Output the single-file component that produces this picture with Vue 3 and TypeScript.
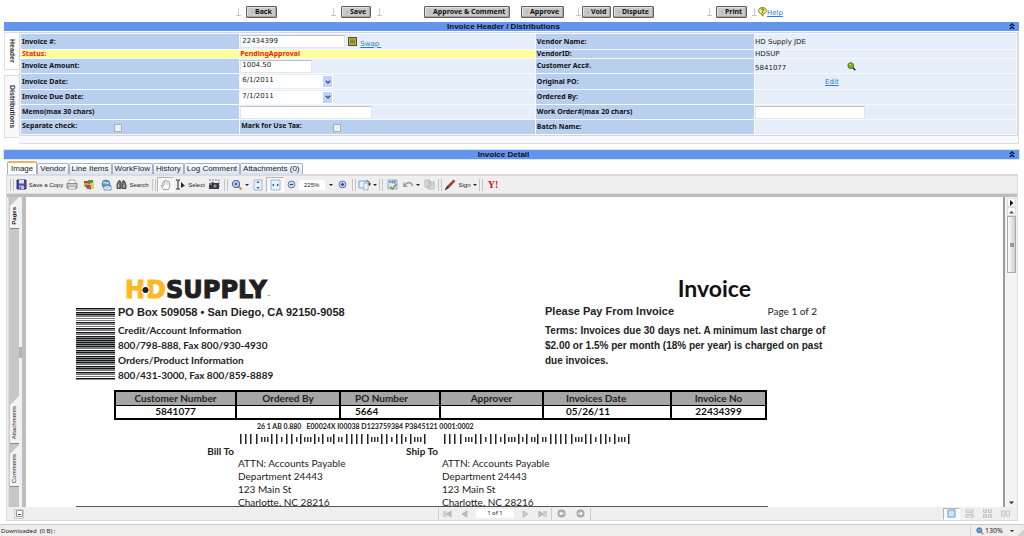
<script setup lang="ts">
import { ref } from 'vue'

interface Stripe { y: number; h: number; c: string }

const invoiceNo = ref('22434399')
const amount = ref('1004.50')
const invoiceDate = ref('6/1/2011')
const dueDate = ref('7/1/2011')
const memo = ref('')
const workOrder = ref('')
const separateCheck = ref(false)
const useTax = ref(false)
const zoom = ref('225%')
const pageNo = ref('1 of 1')

const tabs = ['Image', 'Vendor', 'Line Items', 'WorkFlow', 'History', 'Log Comment', 'Attachments (0)']
const activeTab = ref('Image')

const tall = [0, 5, 10, 16, 31, 36, 46, 51, 60, 74, 82, 93, 106, 111, 116, 121, 127, 141, 146, 156, 161, 170, 184]
const short = [21, 24, 27, 41, 56, 64, 67, 70, 78, 87, 90, 98, 101, 131, 134, 137, 151, 165, 174, 177, 180]

const darkRows = [0, 4, 6, 14, 15, 20, 24, 28, 29, 31, 33, 35, 37, 39, 42, 44, 48, 50, 52, 53, 54, 58, 60, 64, 65, 70]
const stripes: Stripe[] = Array.from({ length: 36 }, (_, i) => {
  const y = i * 2
  const dark = darkRows.includes(y) || darkRows.includes(y + 1)
  return { y, h: dark ? 1.5 : 1, c: dark ? '#15151c' : '#777' }
})

const columns = ['Customer Number', 'Ordered By', 'PO Number', 'Approver', 'Invoices Date', 'Invoice No']
const values = ['5841077', '', '5664', '', '05/26/11', '22434399']
const address = ['ATTN: Accounts Payable', 'Department 24443', '123 Main St', 'Charlotte, NC 28216']
</script>

<template>
  <div class="app">
    <nav class="actions" aria-label="Invoice actions">
      <i class="tick"></i>
      <button class="act">Back</button>
      <i class="tick"></i>
      <button class="act">Save</button>
      <i class="tick"></i>
      <button class="act">Approve &amp; Comment</button>
      <button class="act">Approve</button>
      <i class="tick"></i>
      <button class="act">Void</button>
      <button class="act">Dispute</button>
      <i class="tick"></i>
      <button class="act">Print</button>
      <i class="tick"></i>
      <a class="help" href="#">
        <svg width="9" height="10" viewBox="0 0 9 10"><path d="M4.500.6C2 .6.6 1.900.6 3.700S2 6.600 3.500 6.800L4.700 9.200 5.300 6.700C7.200 6.400 8.400 5.200 8.400 3.600 8.400 1.800 7 .6 4.500.6Z" fill="#f6f36b" stroke="#55551c" stroke-width=".8" /><path d="M3.200 2.800C3.300 1.600 5.800 1.600 5.700 2.900 5.600 3.700 4.500 3.600 4.500 4.500M4.500 5.200V6" fill="none" stroke="#222" stroke-width=".9" /></svg>
        <span>Help</span>
      </a>
    </nav>

    <main class="body">
      <header class="bar">
        <h2>Invoice Header / Distributions</h2>
        <button class="fold" aria-label="Collapse header"><svg width="6" height="7" viewBox="0 0 6 7"><path d="M.8 3 3 1 5.200 3M.8 6 3 4 5.200 6" fill="none" stroke="#0a1436" stroke-width="1.300" /></svg></button>
      </header>

      <section class="head">
        <div class="vtabs">
          <button class="vtab on">Header</button>
          <button class="vtab">Distributions</button>
        </div>
        <div class="panel">
          <table class="form">
            <colgroup><col class="c1" /><col class="c2" /><col class="c1" /><col /></colgroup>
            <tbody>
              <tr class="r15">
                <th><label for="inv">Invoice #:</label></th>
                <td>
                  <div class="line">
                    <input id="inv" v-model="invoiceNo" class="txt w-inv" />
                    <svg class="swapicon" width="9" height="9" viewBox="0 0 9 9"><rect x=".5" y=".5" width="8" height="8" fill="#b5ae45" stroke="#55521b" /><path d="M2 3H7M2 4.500H7M2 6H7" stroke="#6d6828" stroke-width=".8" /></svg>
                    <a class="swap" href="#">Swap&nbsp;</a>
                  </div>
                </td>
                <th>Vendor Name:</th>
                <td>HD Supply JDE</td>
              </tr>
              <tr class="r8 status">
                <th>Status:</th>
                <td class="pending">PendingApproval</td>
                <th class="plain">VendorID:</th>
                <td class="plainv">HDSUP</td>
              </tr>
              <tr class="r14">
                <th><label for="amt">Invoice Amount:</label></th>
                <td><input id="amt" v-model="amount" class="txt w-amt" /></td>
                <th>Customer Acc#.</th>
                <td>
                  <div class="line acc"><span>5841077</span>
                    <svg width="9" height="9" viewBox="0 0 9 9"><circle cx="3.800" cy="3.600" r="2.900" fill="#7db50f" stroke="#4b6f10" stroke-width=".9" /><path d="M2.500 2.700 4.200 2.200" stroke="#d6f07a" /><path d="M6 5.800 8.300 8.200" stroke="#222" stroke-width="1.500" /></svg>
                  </div>
                </td>
              </tr>
              <tr class="r15">
                <th><label for="d1">Invoice Date:</label></th>
                <td>
                  <div class="date"><input id="d1" v-model="invoiceDate" /><button aria-label="Pick invoice date"><svg width="6" height="4" viewBox="0 0 6 4"><path d="M.8.8 3 3 5.200.8" fill="none" stroke="#3d4d7a" stroke-width="1.300" /></svg></button></div>
                </td>
                <th>Original PO:</th>
                <td><a class="edit" href="#">Edit</a></td>
              </tr>
              <tr class="r14">
                <th><label for="d2">Invoice Due Date:</label></th>
                <td>
                  <div class="date"><input id="d2" v-model="dueDate" /><button aria-label="Pick due date"><svg width="6" height="4" viewBox="0 0 6 4"><path d="M.8.8 3 3 5.200.8" fill="none" stroke="#3d4d7a" stroke-width="1.300" /></svg></button></div>
                </td>
                <th>Ordered By:</th>
                <td></td>
              </tr>
              <tr class="r14">
                <th><label for="memo">Memo(max 30 chars)</label></th>
                <td><input id="memo" v-model="memo" class="txt w-memo" /></td>
                <th><label for="wo">Work Order#(max 20 chars)</label></th>
                <td><input id="wo" v-model="workOrder" class="txt w-wo" /></td>
              </tr>
              <tr class="r14">
                <th><div class="chk"><label for="sep">Separate check:</label><input id="sep" v-model="separateCheck" type="checkbox" /></div></th>
                <th><div class="chk"><label for="tax">Mark for Use Tax:</label><input id="tax" v-model="useTax" type="checkbox" /></div></th>
                <th>Batch Name:</th>
                <td></td>
              </tr>
            </tbody>
          </table>
        </div>
      </section>

      <header class="bar second">
        <h2>Invoice Detail</h2>
        <button class="fold" aria-label="Collapse detail"><svg width="6" height="7" viewBox="0 0 6 7"><path d="M.8 3 3 1 5.200 3M.8 6 3 4 5.200 6" fill="none" stroke="#0a1436" stroke-width="1.300" /></svg></button>
      </header>

      <nav class="tabs" role="tablist">
        <button v-for="t in tabs" :key="t" role="tab" :class="{ on: t === activeTab }" @click="activeTab = t">{{ t }}</button>
      </nav>

      <section class="viewer">
        <div class="tools">
          <i class="grip"></i>
          <button class="tool">
            <svg width="11" height="11" viewBox="0 0 11 11"><path d="M1 1H10V10H1Z" fill="#4a48a6" stroke="#302f7d" /><path d="M3 1H8V4.500H3Z" fill="#dfe2f6" /><path d="M3 6.500H8V10H3Z" fill="#b9bde8" /><path d="M4.200 7.500V10" stroke="#302f7d" /></svg>
            Save a Copy
          </button>
          <button class="tool" aria-label="Print page">
            <svg width="12" height="11" viewBox="0 0 12 11"><path d="M3 1H9V5H3Z" fill="#fff" stroke="#999" stroke-width=".8" /><path d="M1 4.500H11V9H1Z" fill="#c9cbd0" stroke="#7d8087" stroke-width=".9" /><path d="M2.500 7.500H9.500L10 10H2Z" fill="#f6f6f6" stroke="#888" stroke-width=".7" /></svg>
          </button>
          <button class="tool" aria-label="Organize">
            <svg width="12" height="12" viewBox="0 0 12 12"><path d="M1 2H7V8H1Z" fill="#e4a91c" /><path d="M1 2H7V4H1Z" fill="#c83a2b" /><path d="M5 1H10V5H5Z" fill="#4b9a3f" /><path d="M7 4H11V10H7Z" fill="#e6cf4a" /><path d="M2 6H7V10H4Z" fill="#6658b8" /><path d="M4 8.500 8 6V11Z" fill="#b4479b" /></svg>
          </button>
          <button class="tool" aria-label="Email">
            <svg width="12" height="12" viewBox="0 0 12 12"><circle cx="6" cy="5" r="4" fill="#5b9bd5" stroke="#2f6ea8" stroke-width=".7" /><path d="M3 4C5 2 7 6 9 3.500" fill="none" stroke="#c9e7b2" stroke-width="1.500" /><path d="M4 6.500H11V11H4Z" fill="#f4f8fd" stroke="#5581ac" stroke-width=".8" /><path d="M4 6.500 7.500 9 11 6.500" fill="none" stroke="#5581ac" stroke-width=".7" /></svg>
          </button>
          <button class="tool">
            <svg width="11" height="11" viewBox="0 0 11 11"><path d="M2 2.500 4 1.500 5 4V9.500H1V6Z" fill="#777" stroke="#333" stroke-width=".8" /><path d="M9 2.500 7 1.500 6 4V9.500H10V6Z" fill="#777" stroke="#333" stroke-width=".8" /><path d="M2.500 5.500V8.500M8 5.500V8.500" stroke="#ddd" stroke-width=".8" /></svg>
            Search
          </button>
          <i class="grip"></i>
          <button class="tool pressed" aria-label="Hand">
            <svg width="12" height="12" viewBox="0 0 12 12"><path d="M3.500 10.500 1.200 6.800C1.500 5.800 2.500 6.200 3.200 7.200L2.800 3.200C3.300 2.300 4 2.500 4.300 3.300L4.600 1.800C5.200 1 6 1.300 6.100 2.100 6.800 1.300 7.600 1.600 7.800 2.600 8.500 2 9.300 2.500 9.400 3.400L9.800 7.500 8.600 10.500Z" fill="#fff" stroke="#888" stroke-width=".8" /><path d="M4.500 3V6M6.200 2.500V5.800M7.900 3V6" stroke="#aaa" stroke-width=".6" /></svg>
          </button>
          <button class="tool">
            <svg width="11" height="11" viewBox="0 0 11 11"><path d="M1 1H2.300L3 1.500 3.700 1H5M3 1.500V9.500M1 10H2.300L3 9.500 3.700 10H5" fill="none" stroke="#222" stroke-width="1" /><path d="M6 3V9L7.500 7.700 10 7Z" fill="#222" /></svg>
            Select
          </button>
          <button class="tool" aria-label="Snapshot">
            <svg width="12" height="11" viewBox="0 0 12 11"><path d="M1 1H11V8" fill="none" stroke="#666" stroke-dasharray="2 1" stroke-width=".8" /><path d="M1 4H11V10H1Z" fill="#3b3f45" /><path d="M3 3H6V4H3Z" fill="#777" /><circle cx="7" cy="7" r="2.200" fill="#8a98a8" stroke="#111" stroke-width=".7" /><path d="M1 5H4" stroke="#ccc" stroke-width=".8" /></svg>
          </button>
          <i class="grip"></i>
          <button class="tool drop" aria-label="Zoom in">
            <svg width="12" height="12" viewBox="0 0 12 12"><path d="M7 7 10.500 10.500" stroke="#dc8d22" stroke-width="2" /><circle cx="5" cy="5" r="3.500" fill="#c8dcf8" stroke="#3e62a8" stroke-width="1.100" /><path d="M3.500 5H6.500M5 3.500V6.500" stroke="#274c98" stroke-width="1.100" /></svg>
          </button>
          <button class="tool" aria-label="Fit page">
            <svg width="10" height="12" viewBox="0 0 10 12"><path d="M1 1H9V11H1Z" fill="#e8f2fd" stroke="#8bb2dc" stroke-width=".9" /><path d="M5 2 6.500 4H3.500ZM5 10 6.500 8H3.500Z" fill="#23569f" /></svg>
          </button>
          <button class="tool pressed" aria-label="Fit width">
            <svg width="11" height="12" viewBox="0 0 11 12"><path d="M1 1H10V11H1Z" fill="#e8f2fd" stroke="#8bb2dc" stroke-width=".9" /><path d="M2 6 4 4.500V7.500ZM9 6 7 4.500V7.500Z" fill="#23569f" /></svg>
          </button>
          <button class="tool" aria-label="Zoom out">
            <svg width="9" height="9" viewBox="0 0 9 9"><circle cx="4.500" cy="4.500" r="3.400" fill="#d7e3f6" stroke="#5674ae" /><path d="M2.800 4.500H6.200" stroke="#2b4684" stroke-width="1.300" /></svg>
          </button>
          <input v-model="zoom" class="zoom" aria-label="Zoom level" />
          <button class="tool drop" aria-label="Zoom levels"></button>
          <button class="tool" aria-label="Zoom in more">
            <svg width="9" height="9" viewBox="0 0 9 9"><circle cx="4.500" cy="4.500" r="3.400" fill="#d7e3f6" stroke="#5674ae" /><path d="M2.800 4.500H6.200M4.500 2.800V6.200" stroke="#2b4684" stroke-width="1.300" /></svg>
          </button>
          <i class="grip"></i>
          <button class="tool drop" aria-label="Rotate">
            <svg width="13" height="12" viewBox="0 0 13 12"><path d="M1 2H7V9H1Z" fill="#e8f2fd" stroke="#6f9acb" stroke-width=".9" /><path d="M6 4H10V11H6Z" fill="#f5f9fe" stroke="#8aa5c5" stroke-width=".8" /><path d="M8 2C10.500 1.500 11.500 3 11.500 5" fill="none" stroke="#333" /><path d="M10 4.500H13L11.500 7Z" fill="#333" /></svg>
          </button>
          <i class="grip"></i>
          <button class="tool" aria-label="Spell check">
            <svg width="11" height="12" viewBox="0 0 11 12"><path d="M1 1H10V10H1Z" fill="#dce9f7" stroke="#7a9fc8" stroke-width=".8" /><path d="M2 4 3 2 4 4M5 2V4H6.200V2ZM9 2H7.500V4H9" fill="none" stroke="#3d69a3" stroke-width=".7" /><path d="M3 7.500 5.500 10 9.500 5" fill="none" stroke="#5ca24c" stroke-width="1.500" /></svg>
          </button>
          <button class="tool drop" aria-label="Undo">
            <svg width="12" height="10" viewBox="0 0 12 10"><path d="M3 5C5 1.500 10 2 10.500 6" fill="none" stroke="#a2a2a2" stroke-width="1.700" /><path d="M1 2V7H6Z" fill="#a2a2a2" /></svg>
          </button>
          <button class="tool" aria-label="Copy">
            <svg width="11" height="11" viewBox="0 0 11 11"><path d="M1 1H6V8H1ZM4 3H10V10H4Z" fill="#ddd" stroke="#b3b3b3" stroke-width=".9" /><path d="M5.500 5H8.500M5.500 7H8.500" stroke="#bbb" stroke-width=".8" /></svg>
          </button>
          <i class="grip"></i>
          <button class="tool drop">
            <svg width="12" height="12" viewBox="0 0 12 12"><path d="M1 11 3 7.500 9.500 1 11 2.200 5 8.500Z" fill="#b2382a" stroke="#6d2018" stroke-width=".6" /><path d="M1 11 3 7.500 4.800 8.800Z" fill="#333" /></svg>
            Sign
          </button>
          <i class="grip"></i>
          <button class="tool yahoo" aria-label="Web search">Y!</button>
        </div>

        <div class="stage">
          <aside class="rail">
            <button class="flag pages"><span>Pages</span></button>
            <button class="flag att"><span>Attachments</span></button>
            <button class="flag com"><span>Comments</span></button>
          </aside>
          <div class="split"><i></i></div>
          <div class="canvas">
            <article class="page">
              <div class="letter">
                <div class="logo"><b class="y">H</b><svg width="11" height="12" viewBox="0 0 11 12"><circle cx="5.500" cy="6" r="4.500" fill="#fff" /><path d="M0 4.500H2V7.500H0ZM9 4.500H11V7.500H9Z" fill="#fdb827" /><circle cx="5.500" cy="6" r="3" fill="#231f20" /></svg><b class="y">D</b><b>SUPPLY</b><small>™</small></div>
                <h1>Invoice</h1>
                <svg class="code" width="39" height="72" viewBox="0 0 39 72">
                  <rect v-for="s in stripes" :key="s.y" x="0" :y="s.y" width="39" :height="s.h" :fill="s.c" />
                </svg>
                <div class="contact">
                  <p class="po">PO Box 509058 • San Diego, CA 92150-9058</p>
                  <p>Credit/Account Information</p>
                  <p>800/798-888, Fax 800/930-4930</p>
                  <p>Orders/Product Information</p>
                  <p>800/431-3000, Fax 800/859-8889</p>
                </div>
                <div class="terms">
                  <div class="pay"><strong>Please Pay From Invoice</strong><span>Page 1 of 2</span></div>
                  <p>Terms: Invoices due 30 days net. A minimum last charge of<br />$2.00 or 1.5% per month (18% per year) is charged on past<br />due invoices.</p>
                </div>
              </div>

              <table class="ledger">
                <colgroup><col class="l1" /><col class="l2" /><col class="l3" /><col class="l4" /><col class="l5" /><col /></colgroup>
                <thead><tr><th v-for="c in columns" :key="c">{{ c }}</th></tr></thead>
                <tbody><tr><td v-for="(v, i) in values" :key="i">{{ v }}</td></tr></tbody>
              </table>

              <p class="postal">26 1 AB 0.880 &nbsp; E00024X I00038 D123759384 P3845121 0001:0002</p>

              <div class="ship">
                <span></span>
                <svg v-for="n in 2" :key="n" class="bars" width="187" height="10" viewBox="0 0 187 10">
                  <rect v-for="x in tall" :key="'t' + x" :x="x" y="0" width="1.500" height="10" fill="#222" />
                  <rect v-for="x in short" :key="'s' + x" :x="x" y="3" width="1.500" height="5" fill="#333" />
                </svg>
                <b>Bill To</b><b>Ship To</b><span></span>
                <span></span>
                <address v-for="n in 2" :key="'a' + n"><div v-for="l in address" :key="l">{{ l }}</div></address>
              </div>
            </article>
          </div>
          <div class="scroll">
            <button aria-label="Show pane"><svg width="5" height="6" viewBox="0 0 5 6"><path d="M1 0V6L4.500 3Z" fill="#111" /></svg></button>
            <button aria-label="Scroll up"><svg width="5" height="4" viewBox="0 0 5 4"><path d="M0 3.500H5L2.500.8Z" fill="#555" /></svg></button>
            <div class="thumb"><i></i></div>
            <button class="down" aria-label="Scroll down"><svg width="5" height="4" viewBox="0 0 5 4"><path d="M0 .5H5L2.500 3.200Z" fill="#333" /></svg></button>
          </div>
        </div>

        <footer class="pager">
          <button class="note" aria-label="Page size"><svg width="7" height="7" viewBox="0 0 7 7"><path d="M.5.5H6.500V6.500H.5Z" fill="#fff" stroke="#99a" /><path d="M2 4.500H5" stroke="#446" /></svg></button>
          <div class="nav">
            <button aria-label="First page"><svg width="9" height="8" viewBox="0 0 9 8"><path d="M1 1V7M8 1V7L4 4ZM3 1V7" fill="#bbb" stroke="#aaa" stroke-width=".9" /></svg></button>
            <button aria-label="Previous page"><svg width="7" height="8" viewBox="0 0 7 8"><path d="M6 .8V7.200L1 4Z" fill="#bbb" stroke="#aaa" stroke-width=".6" /></svg></button>
            <input v-model="pageNo" aria-label="Page" />
            <button aria-label="Next page"><svg width="7" height="8" viewBox="0 0 7 8"><path d="M1 .8V7.200L6 4Z" fill="#ccc" stroke="#aaa" stroke-width=".6" /></svg></button>
            <button aria-label="Last page"><svg width="9" height="8" viewBox="0 0 9 8"><path d="M8 1V7M1 1V7L5 4ZM6 1V7" fill="#bbb" stroke="#aaa" stroke-width=".9" /></svg></button>
          </div>
          <div class="hist">
            <button aria-label="Previous view"><svg width="9" height="9" viewBox="0 0 9 9"><circle cx="4.500" cy="4.500" r="4" fill="#a8a8a8" /><path d="M2 4.500 4.500 2.300V3.700H6.800V5.300H4.500V6.700Z" fill="#fff" /></svg></button>
            <button aria-label="Next view"><svg width="9" height="9" viewBox="0 0 9 9"><circle cx="4.500" cy="4.500" r="4" fill="#a8a8a8" /><path d="M7 4.500 4.500 2.300V3.700H2.200V5.300H4.500V6.700Z" fill="#fff" /></svg></button>
          </div>
          <div class="layouts">
            <button class="pressed" aria-label="Single page"><svg width="9" height="9" viewBox="0 0 9 9"><path d="M1 1H8V8H1Z" fill="#cfe2f8" stroke="#6c9bd0" /></svg></button>
            <button aria-label="Continuous"><svg width="9" height="9" viewBox="0 0 9 9"><path d="M1 0V3.500H8V0M1 9V5.500H8V9" fill="#ddd" stroke="#c4c4c4" /></svg></button>
            <button aria-label="Continuous facing"><svg width="9" height="9" viewBox="0 0 9 9"><path d="M.5 0V3.500H3.500V0M5.500 0V3.500H8.500V0M.5 9V5.500H3.500V9M5.500 9V5.500H8.500V9" fill="#ddd" stroke="#c4c4c4" /></svg></button>
            <button aria-label="Facing"><svg width="9" height="9" viewBox="0 0 9 9"><path d="M.5 2H4V7H.5ZM5 2H8.500V7H5Z" fill="#e8e8e8" stroke="#c4c4c4" stroke-width=".9" /></svg></button>
          </div>
        </footer>
      </section>
    </main>

    <footer class="statusbar">
      <span>Downloaded &nbsp;(0 B) :</span>
      <button class="pct"><svg width="8" height="8" viewBox="0 0 8 8"><path d="M5 5 7.300 7.300" stroke="#c98b35" stroke-width="1.500" /><circle cx="3.300" cy="3.300" r="2.500" fill="#5ea2e4" stroke="#3a6dac" stroke-width=".9" /></svg>130%</button>
      <svg class="size" width="6" height="6" viewBox="0 0 6 6"><path d="M4 0H6V6H0V4H2V2H4Z" fill="#d3cfcf" /></svg>
    </footer>
  </div>
</template>

<style>
html, body { margin: 0; background: #fff; }
</style>

<style scoped>
.app { height: 100vh; min-height: 536px; display: flex; flex-direction: column; background: #fff; color: #222; font-family: "Noto Sans", "DejaVu Sans", sans-serif; font-size: 7px; line-height: 8px; overflow: hidden; }
.app * { box-sizing: border-box; }
button { margin: 0; padding: 0; border: 0; background: none; color: inherit; font: inherit; display: flex; align-items: center; justify-content: center; }
input { margin: 0; font: inherit; color: inherit; }
svg { display: block; flex: none; }
a { color: #2e7fd3; }

.actions { height: 22px; flex: none; display: grid; align-items: center; justify-content: start; column-gap: 5px; padding: 1px 0 0 236px; grid-template-columns: 5px 80px 5px 31px 42px 92px 50px 1px 26px 89px 4px 31px 1px auto; }
.tick { width: 5px; height: 8px; border-bottom: 1px solid #c4c4c4; background: linear-gradient(#ccc, #ccc) 2px 0 / 1px 8px no-repeat; }
.act { justify-self: start; height: 12px; padding: 0 4px 0 2px; border: 1px solid #5f5f5f; border-radius: 1px; background: #c9c9c9; box-shadow: inset -1px -1px #a5a5a5, inset 1px 1px #e2e2e2; font-weight: 700; color: #111; white-space: nowrap; }
.act::before { content: "›"; width: 6px; font-weight: 400; color: #999; }
.help { display: flex; align-items: center; font-family: "DejaVu Sans", sans-serif; }
.help span { padding-top: 3px; }

.body { flex: 1; min-height: 0; margin: 0 5px 0 4px; display: flex; flex-direction: column; }
.bar { flex: none; height: 9px; display: grid; grid-template-columns: 10px 1fr 10px; align-items: center; background: #6495ed; }
.bar h2 { grid-column: 2; margin: 0; padding-right: 16px; text-align: center; font: 700 8px/9px "Liberation Sans", Arial, sans-serif; color: #0a0f1e; }
.bar.second { margin-top: 6px; outline: 1px solid #d7e5f9; }
.fold { justify-content: flex-start; }

.head { flex: none; display: flex; margin-top: 1px; }
.vtabs { width: 15px; display: flex; flex-direction: column; gap: 5px; flex: none; }
.vtab { writing-mode: vertical-rl; width: 15px; height: 63px; border: 1px solid #dcdce2; border-right: 0; background: #f8f8fd; font: 700 7px/12px "Liberation Sans", Arial, sans-serif; color: #333; }
.vtab.on { height: 38px; background: #fff; }
.panel { flex: 1; padding-bottom: 7px; background: #f7f8fd; border-bottom: 1px solid #dcdce2; border-right: 1px solid #dcdce2; }
.form { width: 100%; table-layout: fixed; border-collapse: separate; border-spacing: 1px; background: #f5f8fd; border: 1px solid #d6d6da; }
.form .c1 { width: 22%; }
.form .c2 { width: 29.7%; }
.form th, .form td { padding: 0 1px; text-align: left; white-space: nowrap; vertical-align: middle; height: 14px; }
.form th { background: #b8cfee; font-weight: 700; color: #111; }
.form td { padding: 0; background: #e5eef9; font-family: "DejaVu Sans", sans-serif; }
.form .r15 > * { height: 15px; }
.form .r8 > * { height: 8px; }
.form .status > * { background: #ffff99; color: #f21b24; }
.form td.pending { font-family: "Noto Sans", sans-serif; font-weight: 700; }
.form .status .plain { background: #b8cfee; color: #111; }
.form .status .plainv { background: #e5eef9; color: #222; }
.line { display: flex; align-items: center; }
.txt { display: block; height: 13px; padding: 0 1px 2px; border: 1px solid #e2e6ec; border-top-color: #c0c3c8; background: #fff; }
.w-inv { width: 105px; }
.w-amt { width: 72px; }
.w-memo { width: 132px; }
.w-wo { width: 110px; }
.swapicon { margin: 0 3px; }
.swap { padding-top: 4px; }
.acc span { width: 92px; padding-top: 3px; }
.edit { margin-left: 70px; }
.date { width: 93px; height: 13px; display: flex; background: #fff; }
.date input { width: 83px; border: 0; padding: 0 2px 3px; background: none; }
.date button { width: 9px; height: 11px; margin-top: 1px; background: #bfd3f8; }
.chk { display: flex; align-items: center; }
.chk label { width: 92px; padding-bottom: 3px; }
.chk input { appearance: none; width: 8px; height: 8px; border: 1px solid #aab1ba; background: #eee; margin-top: 2px; }

.tabs { flex: none; height: 13px; margin-top: 2px; padding-left: 3px; display: flex; align-items: flex-end; }
.tabs button { height: 11px; padding: 0 2px; border: 1px solid #a9afc4; border-bottom: 0; border-radius: 2px 2px 0 0; background: linear-gradient(#fff, #dfe1ee); font: 8px/10px "Liberation Sans", Arial, sans-serif; color: #222; white-space: nowrap; }
.tabs .on { height: 13px; padding: 0 3px; border-top: 2px solid #f6b24f; background: #fff; }

.viewer { flex: 1; min-height: 0; margin: 0 1px 3px 2px; border: 2px solid #d5dce6; border-width: 2px 1px 1px 1px; display: flex; flex-direction: column; background: #efefef; }
.tools { flex: none; height: 18px; display: grid; align-items: center; padding-left: 1px; border-bottom: 1px solid #ddd; font-family: "Liberation Sans", Arial, sans-serif; font-size: 6px; grid-template-columns: 7px 49px 16px 17px 18px 35px 7px 17px 32px 16px 7px 21px 16px 18px 15px 28px 8px 15px 7px 20px 7px 16px 22px 14px 8px 33px 8px 16px; }
.grip { height: 12px; width: 4px; border-left: 1px solid #c4c4c4; border-right: 1px solid #c4c4c4; justify-self: center; }
.tool { height: 15px; gap: 2px; white-space: nowrap; }
.pressed { border: 1px solid #fff; border-top-color: #b5b5b5; border-left-color: #b5b5b5; background: #f7f7f7; }
.drop::after { content: ""; border: 2px solid transparent; border-top-color: #222; border-bottom: 0; }
.zoom { width: 26px; height: 10px; border: 0; padding: 0 5px; background: #fff; }
.yahoo { font: 700 10px/10px "Liberation Serif", serif; color: #dd1122; }

.stage { flex: 1; min-height: 0; display: flex; border-top: 3px solid #bcbcbc; padding-left: 1px; }
.rail { width: 11px; flex: none; background: #c6c6c6; display: flex; flex-direction: column; padding: 0 0 20px 1px; border-left: 1px solid #ddd; }
.flag { width: 9px; background: #f3f3f3; clip-path: polygon(0 9px, 100% 0, 100% 100%, 0 100%); border-bottom: 1px solid #888; font: 6px/9px "Liberation Sans", Arial, sans-serif; color: #222; }
.flag span { writing-mode: vertical-rl; transform: rotate(180deg); padding-bottom: 6px; }
.pages { height: 32px; font-weight: 700; }
.att { height: 48px; margin-top: auto; }
.com { height: 42px; margin-top: 1px; }
.split { width: 3px; flex: none; display: flex; align-items: center; background: #f0f0f0; }
.split i { width: 3px; height: 11px; background: #b4b4b4; }
.canvas { flex: 1; min-width: 0; overflow: hidden; border-left: 4px solid #bdbdbd; border-right: 2px solid #9b9b9b; background: #fff; color: #222; }
.scroll { width: 12px; flex: none; padding: 1px 1px 0 2px; display: flex; flex-direction: column; background: #f4f4f4; }
.scroll button { height: 9px; flex: none; background: #fafafa; border: 1px solid #ddd; }
.thumb { height: 57px; display: flex; align-items: center; justify-content: center; border: 1px solid #aaa; background: linear-gradient(90deg, #fdfdfd, #cfcfcf); }
.thumb i { width: 4px; height: 4px; background: #999; }
.scroll .down { margin-top: auto; border: 0; background: none; }

.page { height: 100%; max-width: 692px; margin-left: 50px; padding-top: 77px; border-bottom: 1px solid #555; font: 10px/15px Lato, "Noto Sans", sans-serif; }
.page p { margin: 0; }
.letter { width: max-content; display: grid; grid-template-columns: 42px 427px 274px; grid-template-rows: 32px 84px; }
.logo { grid-column: 1 / 3; padding-left: 49px; display: flex; align-items: center; font: 700 24px/34px "DejaVu Sans", sans-serif; color: #231f20; -webkit-text-stroke: 1px; }
.logo .y { color: #fdb827; }
.logo svg { margin: 0 -5px; position: relative; }
.logo small { font: 4px/6px "DejaVu Sans", sans-serif; padding-top: 14px; -webkit-text-stroke: 0; }
.letter h1 { margin: 0 68px 0 0; text-align: right; font: 700 23px/29px Lato, "Noto Sans", sans-serif; color: #111; }
.code { margin-top: 2px; }
.contact { font-weight: 700; line-height: 15px; }
.contact .po { font: 700 11px/12px "Liberation Sans", Arial, sans-serif; margin-bottom: 5px; }
.terms { padding-right: 2px; font: 700 10px/15px "Liberation Sans", Arial, sans-serif; white-space: nowrap; }
.pay { display: flex; justify-content: space-between; line-height: 10px; margin-bottom: 7px; font-size: 11px; }
.pay span { font: 10px/10px Lato, "Noto Sans", sans-serif; }
.ledger { width: 653px; margin-left: 38px; table-layout: fixed; border-collapse: collapse; font-weight: 700; line-height: 11px; color: #111; border: 2px solid #000; }
.ledger th, .ledger td { height: 14px; padding: 0; border: 2px solid #000; text-align: center; }
.ledger th { background: #a6a6a6; color: #222; border-bottom-width: 1px; }
.ledger td { border-top-width: 1px; }
.ledger tr > :nth-child(3) { text-align: left; padding-left: 14px; }
.ledger tr > :nth-child(5) { text-align: left; padding-left: 22px; }
.ledger .l1 { width: 121px; }
.ledger .l2 { width: 104px; }
.ledger .l3 { width: 100px; }
.ledger .l4 { width: 103px; }
.ledger .l5 { width: 128px; }
.page .postal { margin-left: 181px; font: 700 7px/12px Lato, "Noto Sans", sans-serif; white-space: pre; }
.ship { margin-left: 39px; display: grid; grid-template-columns: 123px 204px 1fr; grid-template-rows: 13px 12px auto; }
.bars { margin: 2px 0 0 2px; }
.ship b { text-align: right; padding-right: 4px; line-height: 12px; }
.ship address { font-style: normal; line-height: 13px; }

.pager { flex: none; height: 13px; display: grid; grid-template-columns: 431px 113px 40px 1fr; align-items: center; }
.note { width: 10px; height: 10px; margin-left: 7px; border: 1px solid #ccc; }
.nav { height: 12px; display: flex; align-items: center; justify-content: space-around; border-left: 1px solid #ccc; }
.nav input { width: 38px; height: 9px; border: 0; padding: 0; text-align: center; background: #fff; font: 6px/9px "Noto Sans", sans-serif; }
.hist { height: 12px; display: flex; align-items: center; justify-content: space-around; border: solid #ccc; border-width: 0 1px; }
.layouts { display: flex; justify-content: flex-end; gap: 1px; padding-right: 3px; }
.layouts button { width: 17px; height: 12px; }

.statusbar { flex: none; height: 12px; display: flex; align-items: center; background: #f1eded; border-top: 1px solid #c9c9c9; font-size: 6px; padding-left: 1px; }
.pct { margin-left: auto; width: 48px; height: 10px; justify-content: flex-start; gap: 1px; padding-left: 5px; border-left: 1px solid #d8d4d4; font-size: 7px; }
.pct::after { content: ""; margin-left: auto; margin-right: 4px; border: 2px solid transparent; border-top-color: #222; border-bottom: 0; }
.size { align-self: flex-end; }
</style>
